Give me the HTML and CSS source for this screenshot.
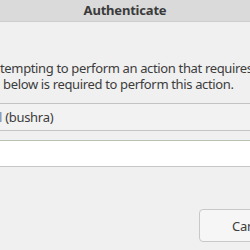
FILE: index.html
```html
<!DOCTYPE html>
<html>
<head>
<meta charset="utf-8">
<link rel="stylesheet" href="styles.css">
</head>
<body>
<div class="dialog">
  <header class="titlebar">Authenticate</header>
  <main class="content">
    <div class="message">
      <div class="line first">tempting to perform an action that requires privileges.</div>
      <div class="line second">below is required to perform this action.</div>
    </div>
    <div class="combo"><span class="user-tail">l</span> (bushra)</div>
    <div class="entry"></div>
    <div class="actions">
      <button class="btn">Cancel</button>
    </div>
  </main>
</div>
</body>
</html>
```

FILE: styles.css
```css
html, body {
  margin: 0;
  padding: 0;
  width: 250px;
  height: 250px;
  overflow: hidden;
  background: #f0f0f0;
}
.dialog {
  width: 250px;
  height: 250px;
  font-family: "Noto Sans", "DejaVu Sans", sans-serif;
  color: #3c3c3c;
  overflow: hidden;
}
.titlebar {
  height: 21px;
  line-height: 21px;
  background: #dadada;
  border-bottom: 1px solid #cdcdcd;
  text-align: center;
  font-weight: bold;
  font-size: 13px;
  letter-spacing: -0.2px;
  color: #3a3a3a;
}
.content {
  display: flex;
  flex-direction: column;
}
.message {
  margin-top: 38px;
  font-size: 13px;
  line-height: 16px;
  letter-spacing: -0.35px;
  white-space: nowrap;
}
.line.second {
  padding-left: 3px;
}
.combo {
  margin-top: 11px;
  margin-left: -4px;
  margin-right: -4px;
  height: 26px;
  border: 1px solid #c4c4c4;
  background: #f2f2f2;
  font-size: 13px;
  letter-spacing: -0.3px;
  line-height: 26px;
  padding-left: 2px;
  white-space: nowrap;
}
.user-tail {
  color: #6f86a8;
}
.entry {
  margin-top: 9px;
  margin-left: -4px;
  margin-right: -4px;
  height: 25px;
  border: 1px solid #c6c6c6;
  border-top-color: #b7c4b2;
  background: #ffffff;
}
.actions {
  display: flex;
  justify-content: flex-end;
  margin-top: 42px;
  margin-right: -60px;
}
.btn {
  width: 111px;
  height: 33px;
  border: 1px solid #c8c8c8;
  border-radius: 4px;
  background: #f6f6f6;
  font-family: "Noto Sans", "DejaVu Sans", sans-serif;
  font-size: 13px;
  letter-spacing: -0.3px;
  color: #3c3c3c;
  text-align: left;
  padding-left: 32px;
}
```
